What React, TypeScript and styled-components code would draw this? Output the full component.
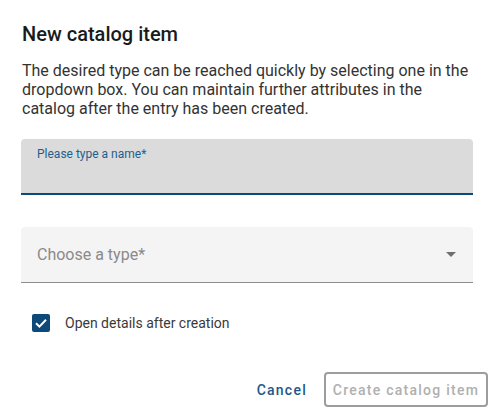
import React from 'react'
import styled, { createGlobalStyle } from 'styled-components'

const GlobalStyle = createGlobalStyle`
  html, body {
    margin: 0;
    padding: 0;
    background: #ffffff;
  }
  body {
    font-family: Roboto, 'Liberation Sans', Arial, sans-serif;
    -webkit-font-smoothing: antialiased;
  }
`

function ArrowDown() {
  return (
    <svg width="10" height="5" viewBox="0 0 10 5">
      <path d="M0 0 L10 0 L5 5 Z" fill="#6f6f6f" />
    </svg>
  )
}

function Check() {
  return (
    <svg width="18" height="18" viewBox="0 0 18 18">
      <path
        d="M4 9.3 L7.4 12.6 L14 5.8"
        stroke="#ffffff"
        strokeWidth="2"
        fill="none"
      />
    </svg>
  )
}

function App() {
  return (
    <>
      <GlobalStyle />
      <Dialog>
        <Title>New catalog item</Title>
        <Intro>
          The desired type can be reached quickly by selecting one in the
          dropdown box. You can maintain further attributes in the catalog
          after the entry has been created.
        </Intro>

        <Field focused>
          <FloatLabel>Please type a name*</FloatLabel>
        </Field>

        <Field>
          <Placeholder>Choose a type*</Placeholder>
          <ArrowDown />
        </Field>

        <CheckRow>
          <Box>
            <Check />
          </Box>
          <CheckLabel>Open details after creation</CheckLabel>
        </CheckRow>

        <Actions>
          <TextButton>Cancel</TextButton>
          <OutlineButton disabled>Create catalog item</OutlineButton>
        </Actions>
      </Dialog>
    </>
  )
}

const Dialog = styled.div`
  width: 493px;
  height: 413px;
  box-sizing: border-box;
  padding: 18px 20px 0 21px;
  display: flex;
  flex-direction: column;
`

const Title = styled.h2`
  margin: 0;
  font-size: 20px;
  line-height: 32px;
  font-weight: 500;
  color: #1a1a1a;
  padding-left: 1px;
`

const Intro = styled.p`
  margin: 11px 0 0 1px;
  font-size: 16px;
  line-height: 19px;
  color: #333333;
`

const Field = styled.div<{ focused?: boolean }>`
  margin-top: ${({ focused }) => (focused ? '21px' : '32px')};
  height: 56px;
  box-sizing: border-box;
  border-radius: 4px 4px 0 0;
  background: ${({ focused }) => (focused ? '#dbdbdb' : '#f4f4f4')};
  border-bottom: ${({ focused }) =>
    focused ? '2px solid #0b4a7a' : '1px solid #8e8e8e'};
  padding: 0 17px 0 16px;
  display: flex;
  align-items: ${({ focused }) => (focused ? 'flex-start' : 'center')};
  justify-content: space-between;
`

const FloatLabel = styled.span`
  margin-top: 8px;
  font-size: 12px;
  line-height: 14px;
  color: #1f5f8e;
`

const Placeholder = styled.span`
  font-size: 16px;
  color: #8a8a8a;
`

const CheckRow = styled.div`
  margin-top: 31px;
  margin-left: 11px;
  display: flex;
  align-items: center;
  gap: 15px;
`

const Box = styled.div`
  width: 18px;
  height: 18px;
  border-radius: 2px;
  background: #0d4a7a;
  display: flex;
`

const CheckLabel = styled.span`
  font-size: 14px;
  color: #3a3a3a;
`

const Actions = styled.div`
  margin-top: 40px;
  margin-right: -15px;
  display: flex;
  justify-content: flex-end;
  align-items: center;
  gap: 17px;
`

const TextButton = styled.button`
  border: none;
  background: none;
  padding: 0;
  font-family: inherit;
  font-size: 14px;
  font-weight: 500;
  letter-spacing: 1.25px;
  color: #1d5886;
  cursor: pointer;
`

const OutlineButton = styled.button`
  height: 35px;
  width: 164px;
  box-sizing: border-box;
  border: 2px solid #9d9d9d;
  border-radius: 4px;
  background: #ffffff;
  font-family: inherit;
  font-size: 14px;
  font-weight: 500;
  letter-spacing: 1.25px;
  color: #b0b0b0;
  padding: 0;
`

export default App
